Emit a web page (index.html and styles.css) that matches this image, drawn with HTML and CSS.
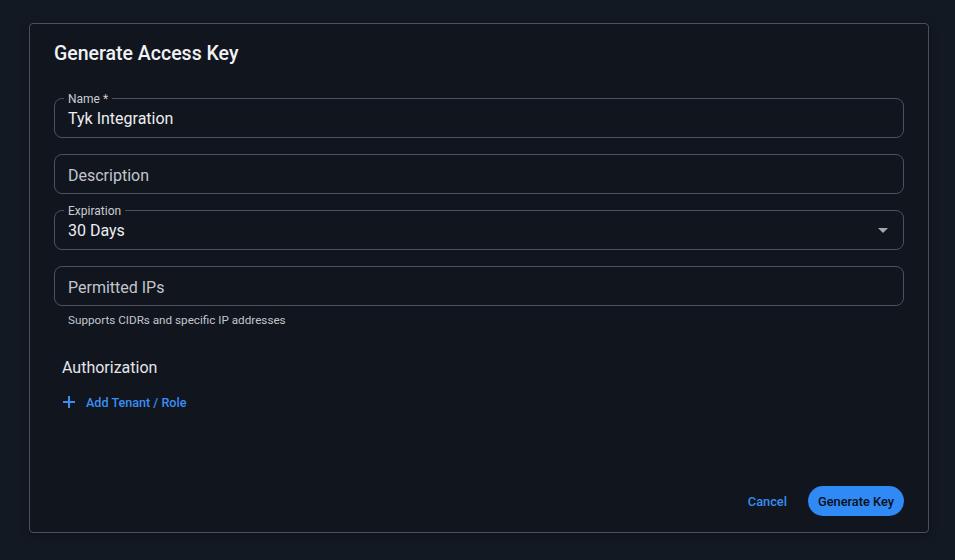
FILE: index.html
```html
<!DOCTYPE html>
<html lang="en">
<head>
<meta charset="utf-8">
<title>Generate Access Key</title>
<link rel="stylesheet" href="styles.css">
</head>
<body>
<div class="card">
  <h2 class="title">Generate Access Key</h2>
  <div class="fields">
    <div class="field">
      <span class="field-label">Name *</span>
      <span class="field-value">Tyk Integration</span>
    </div>
    <div class="field">
      <span class="field-placeholder">Description</span>
    </div>
    <div class="field field-select">
      <span class="field-label">Expiration</span>
      <span class="field-value">30 Days</span>
      <svg class="caret" width="10" height="5" viewBox="0 0 10 5"><path d="M0 0h10L5 5z" fill="#a3a8b0"/></svg>
    </div>
    <div class="field-group">
      <div class="field">
        <span class="field-placeholder">Permitted IPs</span>
      </div>
      <p class="helper">Supports CIDRs and specific IP addresses</p>
    </div>
  </div>
  <h3 class="section">Authorization</h3>
  <a class="add-link" href="#">
    <svg width="12" height="12" viewBox="0 0 12 12"><path d="M6 0v12M0 6h12" stroke="#3a8ef2" stroke-width="2"/></svg>
    <span>Add Tenant / Role</span>
  </a>
  <div class="actions">
    <button class="btn-text">Cancel</button>
    <button class="btn-primary">Generate Key</button>
  </div>
</div>
</body>
</html>
```

FILE: styles.css
```css
* { box-sizing: border-box; }
html, body { margin: 0; padding: 0; }
body {
  background: #131923;
  font-family: Roboto, "Liberation Sans", sans-serif;
  color: #e6e8eb;
  width: 955px;
  height: 560px;
  padding: 23px 0 0 29px;
}
.card {
  width: 900px;
  height: 510px;
  border: 1px solid #4a515c;
  border-radius: 4px;
  background: #10151e;
  box-shadow: 0 2px 8px rgba(0,0,0,0.35);
  padding: 17px 24px 16px 24px;
  display: flex;
  flex-direction: column;
}
.title {
  margin: 0 0 31px 0;
  font-size: 19.5px;
  line-height: 26px;
  font-weight: 500;
  color: #f0f2f5;
}
.fields {
  display: flex;
  flex-direction: column;
  gap: 16px;
}
.field {
  position: relative;
  height: 40px;
  border: 1px solid #4b525d;
  border-radius: 8px;
  padding: 0 13px;
  display: flex;
  align-items: center;
}
.field-label {
  position: absolute;
  top: -7px;
  left: 9px;
  padding: 0 4px;
  background: #10151e;
  font-size: 12px;
  line-height: 14px;
  color: #c9cdd3;
}
.field-value {
  font-size: 16px;
  line-height: 20px;
  color: #eceef1;
  padding-top: 1px;
}
.field-placeholder {
  font-size: 16px;
  line-height: 20px;
  color: #c2c6cc;
  padding-top: 3px;
}
.field-select { justify-content: space-between; }
.caret { margin-right: 2px; margin-top: 1px; }
.helper {
  margin: 6px 0 0 14px;
  font-size: 11.7px;
  line-height: 16px;
  color: #c3c7cd;
}
.section {
  margin: 28px 0 0 8px;
  font-size: 16px;
  line-height: 24px;
  font-weight: 400;
  color: #e4e6ea;
}
.add-link {
  margin: 12px 0 0 9px;
  display: flex;
  align-items: center;
  gap: 11px;
  height: 20px;
  text-decoration: none;
  color: #3a8ef2;
  font-size: 12.6px;
  font-weight: 500;
}
.actions {
  margin-top: auto;
  display: flex;
  justify-content: flex-end;
  align-items: center;
  gap: 21px;
}
.btn-text {
  background: none;
  border: 0;
  padding: 0;
  font-family: inherit;
  font-size: 12.8px;
  font-weight: 500;
  color: #3a8ef2;
}
.btn-primary {
  height: 30px;
  padding: 0 10px;
  border: 0;
  border-radius: 15px;
  background: #2f8af5;
  font-family: inherit;
  font-size: 12.8px;
  font-weight: 500;
  color: #0a0f16;
}
```
